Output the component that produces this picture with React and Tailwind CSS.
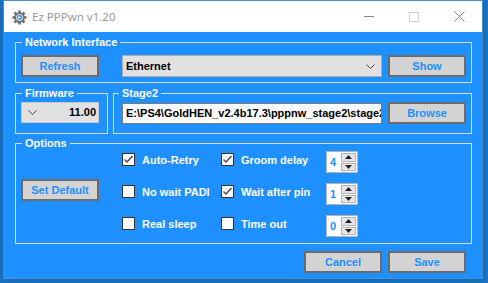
import React from "react";

const font = { fontFamily: '"Liberation Sans", Arial, sans-serif' };

function Btn({ children, className = "" }) {
  return (
    <div
      className={`flex h-[22px] w-[78px] shrink-0 items-center justify-center border-2 border-[#6b6b6b] bg-[#d3d3d3] text-[11px] font-bold text-[#1e90ff] ${className}`}
    >
      {children}
    </div>
  );
}

function Chevron({ className = "" }) {
  return (
    <svg width="9" height="5" viewBox="0 0 9 5" className={className}>
      <path d="M0.5 0.5 L4.5 4.5 L8.5 0.5" fill="none" stroke="#444" strokeWidth="1" />
    </svg>
  );
}

function Check({ checked }) {
  return (
    <div className="flex h-[13px] w-[13px] shrink-0 items-center justify-center border border-[#333] bg-white">
      {checked && (
        <svg width="11" height="11" viewBox="0 0 11 11">
          <path d="M1.5 5.5 L4 8 L9.5 2" fill="none" stroke="#444" strokeWidth="1.3" />
        </svg>
      )}
    </div>
  );
}

function Option({ label, checked }) {
  return (
    <div className="mt-[2px] flex h-[13px] items-center gap-[7px] self-start">
      <Check checked={checked} />
      <span className="whitespace-nowrap text-[11px] font-bold leading-[14px] text-white">
        {label}
      </span>
    </div>
  );
}

function Spinner({ value }) {
  return (
    <div className="flex h-[22px] w-[32px] border border-[#b4b4b4] bg-white">
      <span className="flex-1 pl-[3px] text-[11px] font-bold leading-[20px] text-[#1e90ff]">
        {value}
      </span>
      <div className="my-[1px] mr-[1px] flex w-[15px] flex-col gap-[1px]">
        <div className="flex flex-1 items-center justify-center border border-[#b4b4b4] bg-[#e6e6e6]">
          <svg width="7" height="4" viewBox="0 0 7 4">
            <path d="M0 4 L3.5 0 L7 4 Z" fill="#222" />
          </svg>
        </div>
        <div className="flex flex-1 items-center justify-center border border-[#b4b4b4] bg-[#e6e6e6]">
          <svg width="7" height="4" viewBox="0 0 7 4">
            <path d="M0 0 L3.5 4 L7 0 Z" fill="#222" />
          </svg>
        </div>
      </div>
    </div>
  );
}

function Legend({ children, className = "ml-[1px] px-[3px]" }) {
  return (
    <legend className={`text-[11px] font-bold leading-[16px] text-white ${className}`}>
      {children}
    </legend>
  );
}

function Gear() {
  return (
    <svg width="15" height="15" viewBox="0 0 16 16">
      <g fill="#6f6f6f">
        {[0, 45, 90, 135, 180, 225, 270, 315].map((a) => (
          <rect key={a} x="6.6" y="0.5" width="2.8" height="3.5" transform={`rotate(${a} 8 8)`} />
        ))}
        <circle cx="8" cy="8" r="5.6" />
      </g>
      <circle cx="8" cy="8" r="3.8" fill="#d6d6d6" />
      <circle cx="8" cy="8" r="2.6" fill="#2f8ae6" />
      <path d="M6.8 6.4 L9.8 8 L6.8 9.6 Z" fill="#fff" />
    </svg>
  );
}

export default function App() {
  return (
    <div className="h-[283px] w-[488px] overflow-hidden bg-[#1976c9]" style={font}>
      <div className="ml-[3px] flex h-[279px] w-[480px] flex-col border border-[#4a8fd2] shadow-[0_0_6px_rgba(0,0,0,0.25)]">
        {/* title bar */}
        <div className="flex h-[31px] shrink-0 items-center bg-white">
          <div className="ml-[8px] mt-[1px]">
            <Gear />
          </div>
          <span
            className="ml-[5px] text-[11.5px] text-[#999]"
            style={{ fontFamily: '"Noto Sans", "Open Sans", sans-serif' }}
          >
            Ez PPPwn v1.20
          </span>
          <div className="ml-auto flex items-center">
            <div className="h-px w-[10px] bg-[#888]" />
            <div className="ml-[35px] h-[10px] w-[10px] border border-[#d0d0d0]" />
            <svg width="11" height="11" viewBox="0 0 11 11" className="ml-[35px] mr-[17px]">
              <path d="M0.5 0.5 L10.5 10.5 M10.5 0.5 L0.5 10.5" stroke="#888" strokeWidth="1" />
            </svg>
          </div>
        </div>

        {/* client area */}
        <div className="flex flex-1 flex-col bg-[#1e90ff] pl-[11px] pr-[10px] pt-[2px]">
          <fieldset className="border border-[#dcdcdc] pb-[5px] pl-[5px] pr-[4px] pt-[5px]">
            <Legend>Network Interface</Legend>
            <div className="flex items-center">
              <Btn>Refresh</Btn>
              <div className="ml-[23px] flex h-[22px] w-[260px] items-center justify-between border border-[#adadad] bg-[#e1e1e1] pl-[3px] pr-[6px]">
                <span className="text-[11px] font-bold text-black">Ethernet</span>
                <Chevron />
              </div>
              <Btn className="ml-[6px]">Show</Btn>
            </div>
          </fieldset>

          <div className="mt-[2px] flex gap-[5px]">
            <fieldset className="w-[93px] border border-[#dcdcdc] pb-[9px] pl-[5px] pt-[1px]">
              <Legend>Firmware</Legend>
              <div className="flex h-[21px] w-[78px] items-center justify-between border border-[#c8c8c8] bg-[#e1e1e1] pl-[6px] pr-[2px]">
                <Chevron />
                <span className="text-[11px] font-bold text-black">11.00</span>
              </div>
            </fieldset>
            <fieldset className="flex-1 border border-[#dcdcdc] pb-[9px] pl-[8px] pt-[1px]">
              <Legend className="ml-[-3px] px-[3px]">Stage2</Legend>
              <div className="flex items-center">
                <div className="flex h-[21px] w-[260px] items-center overflow-hidden border border-[#7a7a7a] bg-[#fafafa] pl-[3px]">
                  <span className="whitespace-nowrap text-[11px] font-bold text-black">
                    E:\PS4\GoldHEN_v2.4b17.3\pppnw_stage2\stage2.bin
                  </span>
                </div>
                <Btn className="ml-[6px] h-[21px]">Browse</Btn>
              </div>
            </fieldset>
          </div>

          <fieldset className="mt-[1px] border border-[#dcdcdc] pb-[6px] pl-[5px] pt-0">
            <Legend>Options</Legend>
            <div className="flex">
              <Btn className="mt-[28px]">Set Default</Btn>
              <div className="ml-[23px] grid h-[86px] grid-cols-[99px_105px_32px] grid-rows-[22px_22px_22px] gap-y-[10px]">
                <Option label="Auto-Retry" checked />
                <Option label="Groom delay" checked />
                <Spinner value="4" />
                <Option label="No wait PADI" />
                <Option label="Wait after pin" checked />
                <Spinner value="1" />
                <Option label="Real sleep" />
                <Option label="Time out" />
                <Spinner value="0" />
              </div>
            </div>
          </fieldset>

          <div className="mt-[7px] flex justify-end gap-[6px] pr-[6px]">
            <Btn>Cancel</Btn>
            <Btn>Save</Btn>
          </div>
        </div>
      </div>
    </div>
  );
}
